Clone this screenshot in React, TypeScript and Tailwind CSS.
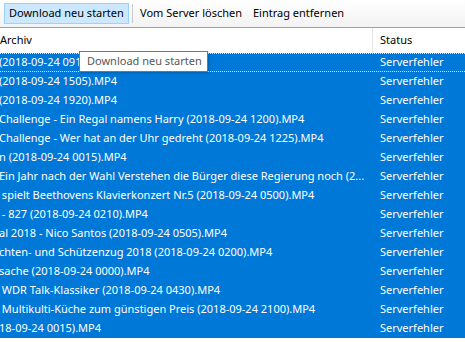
import React from "react";

const rows: string[] = [
  "(2018-09-24 091",
  "(2018-09-24 1505).MP4",
  "(2018-09-24 1920).MP4",
  "Challenge - Ein Regal namens Harry (2018-09-24 1200).MP4",
  "Challenge - Wer hat an der Uhr gedreht (2018-09-24 1225).MP4",
  "n (2018-09-24 0015).MP4",
  "Ein Jahr nach der Wahl Verstehen die Bürger diese Regierung noch (2...",
  "\u00a0spielt Beethovens Klavierkonzert Nr.5 (2018-09-24 0500).MP4",
  "\u00a0- 827 (2018-09-24 0210).MP4",
  "al 2018 - Nico Santos (2018-09-24 0505).MP4",
  "chten- und Schützenzug 2018 (2018-09-24 0200).MP4",
  "sache (2018-09-24 0000).MP4",
  "\u00a0WDR Talk-Klassiker (2018-09-24 0430).MP4",
  "\u00a0Multikulti-Küche zum günstigen Preis (2018-09-24 2100).MP4",
  "18-09-24 0015).MP4",
];

export default function App() {
  return (
    <div
      className="relative w-[465px] h-[342px] overflow-hidden bg-white text-[11px] text-black"
      style={{ fontFamily: '"Noto Sans", "Liberation Sans", sans-serif' }}
    >
      {/* toolbar */}
      <div className="flex items-center h-[28px] px-[4px] bg-gradient-to-b from-white to-[#f2f2f2] border-b border-[#a0a0a0]">
        <div className="flex items-center h-[21px] w-[125px] px-[4px] bg-[#cce8ff] border border-[#99d1ff] whitespace-nowrap">
          Download neu starten
        </div>
        <div className="w-px h-[19px] bg-[#c8c8c8] mx-[3px]" />
        <div className="flex items-center h-[21px] w-[117px] pl-[4px] whitespace-nowrap">Vom Server löschen</div>
        <div className="flex items-center h-[21px] whitespace-nowrap">Eintrag entfernen</div>
      </div>

      {/* header */}
      <div className="flex h-[25px] items-center bg-white">
        <div className="w-[373px] h-full flex items-center border-r border-[#e5e5e5] whitespace-nowrap">
          Archiv
        </div>
        <div className="pl-[7px]">Status</div>
      </div>

      {/* rows */}
      <div className="bg-[#0078d7] text-white">
        {rows.map((r, i) => (
          <div
            key={i}
            className={
              "flex h-[19px] items-center " +
              (i === 0 ? "border-y border-dotted border-[#cfe4f7]" : "")
            }
          >
            <div className="w-[374px] overflow-hidden whitespace-nowrap ml-[-1px]">{r}</div>
            <div className="pl-[7px] whitespace-nowrap">Serverfehler</div>
          </div>
        ))}
      </div>

      {/* tooltip */}
      <div className="absolute left-[79px] top-[51px] h-[21px] w-[129px] flex items-center pl-[7px] bg-white border border-[#767676] text-[#575757] whitespace-nowrap shadow-[1px_1px_2px_rgba(0,0,0,0.2)]">
        Download neu starten
      </div>
    </div>
  );
}
